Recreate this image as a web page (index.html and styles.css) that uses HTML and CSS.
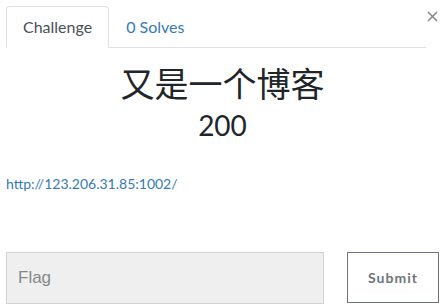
FILE: index.html
```html
<!DOCTYPE html>
<html>
<head>
<meta charset="utf-8">
<title>Challenge</title>
<link rel="stylesheet" href="styles.css">
</head>
<body>
<div class="modal">
	<button class="close" type="button" aria-label="Close">
		<svg width="11" height="11" viewBox="0 0 11 11"><path d="M1 1L10 10M10 1L1 10" stroke="#8a8a8a" stroke-width="1.6" fill="none"/></svg>
	</button>
	<ul class="tabs">
		<li class="tab active">Challenge</li>
		<li class="tab">0 Solves</li>
	</ul>
	<div class="content">
		<h2 class="name">又是一个博客</h2>
		<h3 class="value">200</h3>
		<p class="desc"><a href="#">http://123.206.31.85:1002/</a></p>
	</div>
	<form class="submit-row">
		<input class="flag" type="text" placeholder="Flag">
		<button class="submit" type="button">Submit</button>
	</form>
</div>
</body>
</html>
```

FILE: styles.css
```css
body {margin: 0; background: #fff; font-family: Lato, "Noto Sans CJK SC", sans-serif; color: #212529;}
.modal {position: relative; padding: 6px 7px 0 6px;}
.close {position: absolute; top: 11px; left: 427px; border: 0; background: none; padding: 0; line-height: 0;}
.tabs {display: flex; list-style: none; margin: 0 13px 0 0; padding: 0; border-bottom: 1px solid #dee2e6; height: 41px;}
.tab {padding: 0 16px; line-height: 40px; font-size: 16px; color: #337ab7; border: 1px solid transparent; border-radius: 4px 4px 0 0; margin-bottom: -1px;}
.tab.active {color: #495057; border-color: #dee2e6 #dee2e6 #fff;}
.content {text-align: center;}
.name {margin: 15px 0 0; font-size: 34px; font-weight: 400; line-height: 42px;}
.value {margin: 2px 0 0; font-size: 28px; font-weight: 400; line-height: 36px;}
.desc {text-align: left; margin: 32px 0 0; font-size: 14px;}
.desc a {color: #337ab7; text-decoration: none;}
.submit-row {display: flex; justify-content: space-between; align-items: flex-start; margin-top: 60px;}
.flag {box-sizing: border-box; width: 318px; height: 52px; background: #efefef; border: 1px solid #cfd4d9; padding: 0 11px; font-size: 17px; font-family: "Liberation Sans", sans-serif;}
.flag::placeholder {color: #888;}
.submit {box-sizing: border-box; width: 92px; height: 51px; background: #fff; border: 1px solid #6c757d; color: #6c757d; font-family: Lato, sans-serif; font-weight: 700; font-size: 14px; letter-spacing: 1px;}
```
